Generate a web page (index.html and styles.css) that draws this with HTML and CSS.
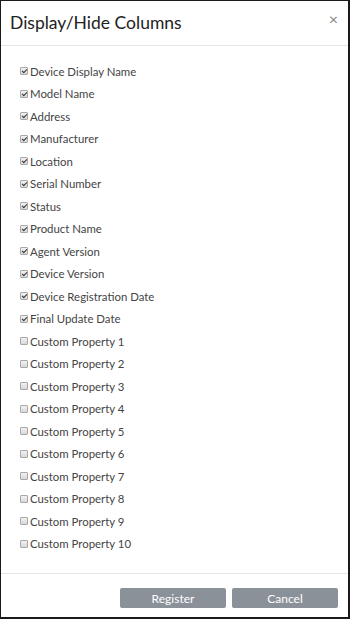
FILE: index.html
```html
<!DOCTYPE html>
<html lang="en">
<head>
  <meta charset="UTF-8">
  <title>Display/Hide Columns</title>
  <link rel="stylesheet" href="styles.css">
</head>
<body>
  <div class="dialog">
    <div class="dialog-header">
      <h2 class="dialog-title">Display/Hide Columns</h2>
      <span class="close">&times;</span>
    </div>
    <ul class="column-list">
      <li class="checked"><span class="box"></span>Device Display Name</li>
      <li class="checked"><span class="box"></span>Model Name</li>
      <li class="checked"><span class="box"></span>Address</li>
      <li class="checked"><span class="box"></span>Manufacturer</li>
      <li class="checked"><span class="box"></span>Location</li>
      <li class="checked"><span class="box"></span>Serial Number</li>
      <li class="checked"><span class="box"></span>Status</li>
      <li class="checked"><span class="box"></span>Product Name</li>
      <li class="checked"><span class="box"></span>Agent Version</li>
      <li class="checked"><span class="box"></span>Device Version</li>
      <li class="checked"><span class="box"></span>Device Registration Date</li>
      <li class="checked"><span class="box"></span>Final Update Date</li>
      <li><span class="box"></span>Custom Property 1</li>
      <li><span class="box"></span>Custom Property 2</li>
      <li><span class="box"></span>Custom Property 3</li>
      <li><span class="box"></span>Custom Property 4</li>
      <li><span class="box"></span>Custom Property 5</li>
      <li><span class="box"></span>Custom Property 6</li>
      <li><span class="box"></span>Custom Property 7</li>
      <li><span class="box"></span>Custom Property 8</li>
      <li><span class="box"></span>Custom Property 9</li>
      <li><span class="box"></span>Custom Property 10</li>
    </ul>
    <div class="dialog-footer">
      <button class="btn">Register</button>
      <button class="btn">Cancel</button>
    </div>
  </div>
</body>
</html>
```

FILE: styles.css
```css
* { box-sizing: border-box; }
body {
  margin: 0;
  width: 350px;
  height: 619px;
  background: #fff;
  font-family: Lato, 'Liberation Sans', sans-serif;
  color: #333;
}
.dialog {
  height: 619px;
  display: flex;
  flex-direction: column;
  border-style: solid;
  border-color: #1a1a1a;
  border-width: 1px 2px 2px 1px;
}
.dialog-header {
  height: 45px;
  flex: none;
  display: flex;
  align-items: center;
  justify-content: space-between;
  padding: 0 10px 2px 9px;
  border-bottom: 1px solid #e5e5e5;
}
.dialog-title {
  margin: 0;
  font-size: 17.5px;
  font-weight: normal;
  color: #222;
}
.close {
  font-size: 16px;
  color: #888;
  line-height: 1;
  margin-top: -6px;
}
.column-list {
  list-style: none;
  margin: 0;
  padding: 14px 0 0 19px;
  flex: 1;
}
.column-list li {
  height: 22.5px;
  display: flex;
  align-items: center;
  font-size: 11.4px;
  color: #444;
}
.box {
  width: 8px;
  height: 8px;
  margin-right: 2px;
  border: 1px solid #a8a8a8;
  border-radius: 1px;
  background: linear-gradient(#f2f2f2, #d8d8d8);
  position: relative;
}
.checked .box::after {
  content: "";
  position: absolute;
  left: 2px;
  top: 0;
  width: 2px;
  height: 4px;
  border: solid #333;
  border-width: 0 1.5px 1.5px 0;
  transform: rotate(45deg);
}
.dialog-footer {
  flex: none;
  height: 44px;
  border-top: 1px solid #e5e5e5;
  display: flex;
  justify-content: flex-end;
  align-items: flex-start;
  gap: 6px;
  padding: 14px 10px 0 0;
}
.btn {
  width: 106px;
  height: 20px;
  border: none;
  border-radius: 2px;
  background: #8b9199;
  color: #fff;
  font-family: Lato, 'Liberation Sans', sans-serif;
  font-size: 12px;
  padding: 0;
}
```
